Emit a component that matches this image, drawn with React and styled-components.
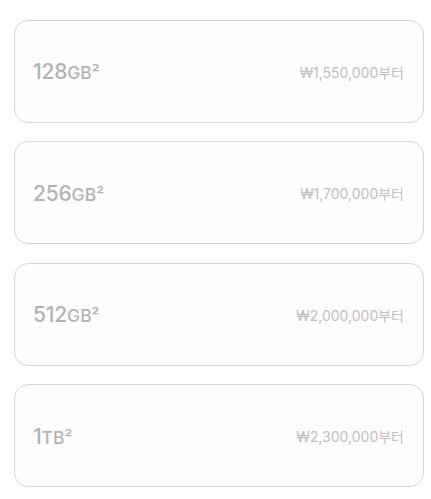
import React from 'react'
import styled, {createGlobalStyle} from 'styled-components'

const Global = createGlobalStyle`
  body {
    margin: 0;
    background: #fff;
    font-family: "Inter", "Noto Sans CJK KR", sans-serif;
  }
`

const List = styled.div`
  display: flex;
  flex-direction: column;
  gap: 18.6px;
  padding: 20px 7px 0 14px;
`

const Card = styled.div`
  display: flex;
  align-items: center;
  justify-content: space-between;
  box-sizing: border-box;
  height: 102.8px;
  padding: 1px 19px 0 18px;
  border: 1px solid #d6d6d6;
  border-radius: 14px;
  background: #fdfdfd;
`

const Capacity = styled.div`
  color: #b3b3b3;
  font-size: 21px;
  font-weight: 500;
  letter-spacing: -0.2px;
`

const Unit = styled.span`
  font-size: 17.5px;
  font-weight: 500;
  letter-spacing: 0;
`

const Price = styled.div`
  color: #c0c0c0;
  font-size: 14px;
  letter-spacing: 0;
`

const options = [
  {size: '128', unit: 'GB²', price: '₩1,550,000부터'},
  {size: '256', unit: 'GB²', price: '₩1,700,000부터'},
  {size: '512', unit: 'GB²', price: '₩2,000,000부터'},
  {size: '1', unit: 'TB²', price: '₩2,300,000부터'},
]

const App = () => {
  return (
    <>
      <Global />
      <List>
        {options.map(o => (
          <Card key={o.size}>
            <Capacity>
              {o.size}<Unit>{o.unit}</Unit>
            </Capacity>
            <Price>{o.price}</Price>
          </Card>
        ))}
      </List>
    </>
  )
}

export default App
